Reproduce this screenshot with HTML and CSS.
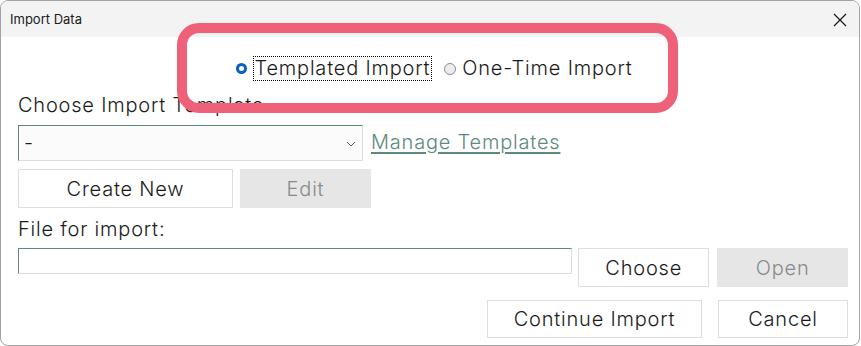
FILE: index.html
```html
<!DOCTYPE html>
<html lang="en">
<head>
	<meta charset="UTF-8">
	<title>Import Data</title>
	<link rel="stylesheet" href="styles.css">
</head>
<body>
	<div class="window">
		<div class="titlebar">
			<span class="title">Import Data</span>
			<svg class="close" width="14" height="14" viewBox="0 0 14 14">
				<path d="M1 1 L13 13 M13 1 L1 13" stroke="#1a1a1a" stroke-width="1.2" fill="none"/>
			</svg>
		</div>

		<div class="content">
			<!-- import mode -->
			<div class="mode-row">
				<span class="radio on"></span>
				<span class="radio-text focused">Templated Import</span>
				<span class="radio off"></span>
				<span class="radio-text">One-Time Import</span>
			</div>

			<div class="label">Choose Import Template</div>
			<div class="select-row">
				<div class="select">
					<span>-</span>
					<svg width="10" height="6" viewBox="0 0 10 6">
						<path d="M1 1 L5 5 L9 1" stroke="#555" stroke-width="1" fill="none"/>
					</svg>
				</div>
				<a href="#" class="link">Manage Templates</a>
			</div>
			<div class="btn-row">
				<button class="btn wide">Create New</button>
				<button class="btn narrow" disabled>Edit</button>
			</div>

			<div class="label file-label">File for import:</div>
			<div class="file-row">
				<div class="file-input"></div>
				<button class="btn narrow">Choose</button>
				<button class="btn narrow open" disabled>Open</button>
			</div>

			<div class="action-row">
				<button class="btn wide">Continue Import</button>
				<button class="btn narrow cancel">Cancel</button>
			</div>
		</div>

		<div class="highlight"></div>
	</div>
</body>
</html>
```

FILE: styles.css
```css
body {
	margin: 0;
	background: #fff;
	font-family: Inter, "Noto Sans", sans-serif;
	color: #1a1a1a;
}

.window {
	position: relative;
	width: 860px;
	height: 346px;
	box-sizing: border-box;
	border: 1px solid #a3a3a3;
	border-radius: 8px;
	overflow: hidden;
	background: #fff;
}

/* title bar */
.titlebar {
	height: 36px;
	background: #f3f3f3;
	display: flex;
	align-items: center;
	justify-content: space-between;
	padding: 0 12px 0 9px;
}
.title {
	font-size: 13px;
}
.close {
	margin-top: 1px;
}

.content {
	padding: 0 11px 0 17px;
	font-weight: 350;
	letter-spacing: 0.8px;
}

/* radio row */
.mode-row {
	margin-top: 19px;
	display: flex;
	align-items: center;
	justify-content: center;
	padding-left: 5px;
}
.radio {
	display: inline-block;
	box-sizing: border-box;
	border-radius: 50%;
}
.radio.on {
	width: 11px;
	height: 11px;
	border: 3px solid #0a5fbf;
	background: #fff;
	margin-right: 6px;
}
.radio.off {
	width: 12px;
	height: 12px;
	border: 1px solid #8c8c8c;
	background: #ededed;
	margin-left: 12px;
	margin-right: 5px;
}
.radio-text {
	font-size: 20px;
	line-height: 23px;
	border: 1px solid transparent;
	padding: 0 1px 0 0;
}
.radio-text.focused {
	border: 1px dotted #000;
}

.label {
	font-size: 20px;
	line-height: 24px;
	margin-top: 12px;
}
.file-label {
	margin-top: 9px;
}

/* template select */
.select-row {
	margin-top: 8px;
	display: flex;
	align-items: center;
}
.select {
	width: 345px;
	height: 36px;
	box-sizing: border-box;
	display: flex;
	align-items: center;
	justify-content: space-between;
	padding: 0 6px 0 5px;
	background: #fbfbfb;
	border: 1px solid #dcdcdc;
	border-top-color: #5d8a7c;
	border-left-color: #5d8a7c;
	font-size: 20px;
}
.select svg {
	margin-top: 2px;
}
.link {
	margin-left: 8px;
	margin-top: -3px;
	font-size: 20px;
	color: #5d8a7c;
	text-decoration: underline;
	text-underline-offset: 3px;
}

/* buttons */
.btn {
	height: 39px;
	box-sizing: border-box;
	background: #fff;
	border: 1px solid #dedede;
	border-radius: 0;
	font-family: Inter, "Noto Sans", sans-serif;
	font-weight: 350;
	letter-spacing: 0.8px;
	font-size: 20px;
	color: #1a1a1a;
	padding: 0;
}
.btn:disabled {
	background: #e6e6e6;
	border-color: #e6e6e6;
	color: #8a8a8a;
}
.btn.wide {
	width: 215px;
}
.btn.narrow {
	width: 131px;
}

.btn-row {
	margin-top: 8px;
	display: flex;
	gap: 7px;
}

/* file row */
.file-row {
	margin-top: 7px;
	display: flex;
	align-items: flex-start;
}
.file-input {
	width: 555px;
	height: 26px;
	box-sizing: border-box;
	background: #fff;
	border: 1px solid #dcdcdc;
	border-top-color: #5d8a7c;
	border-left-color: #5d8a7c;
	margin-right: 6px;
}
.btn.open {
	margin-left: 8px;
}

.action-row {
	margin-top: 13px;
	display: flex;
	justify-content: flex-end;
	gap: 16px;
}
.action-row .btn {
	height: 38px;
}
.btn.cancel {
	width: 130px;
}

/* red annotation frame over the radio row */
.highlight {
	position: absolute;
	left: 176px;
	top: 22px;
	width: 501px;
	height: 90px;
	box-sizing: border-box;
	border: 10px solid #ef6179;
	border-radius: 22px;
}
```
